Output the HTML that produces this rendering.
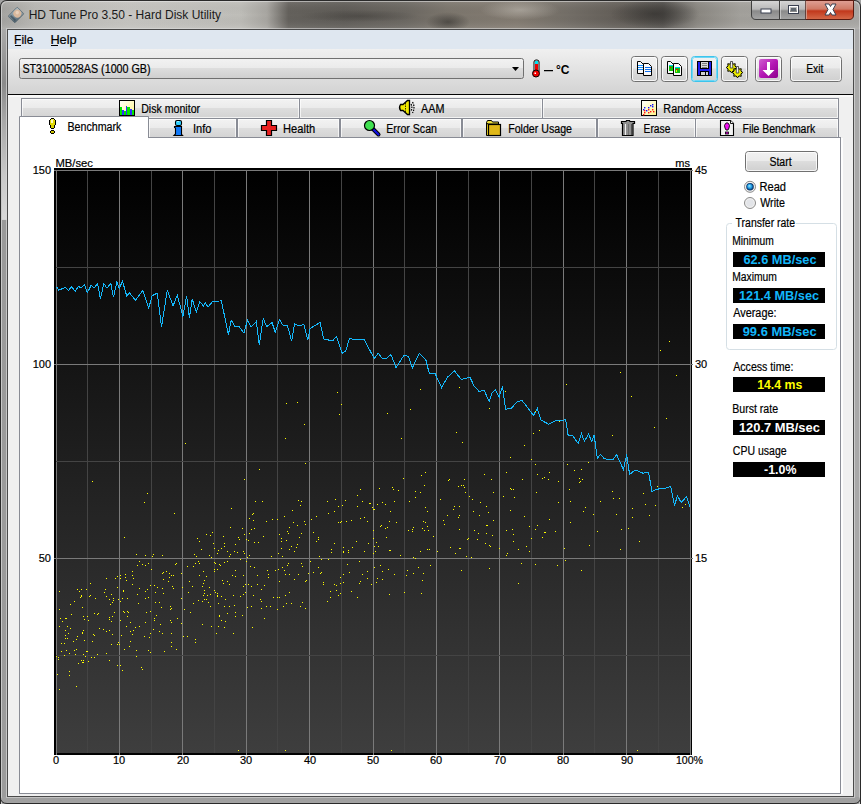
<!DOCTYPE html>
<html><head><meta charset="utf-8"><style>
html,body{margin:0;padding:0;background:#a3a3a3;width:861px;height:804px;overflow:hidden}
svg{display:block;font-family:"Liberation Sans", sans-serif}
</style></head><body>
<svg width="861" height="804" viewBox="0 0 861 804">
<defs>
<linearGradient id="title" x1="0" y1="0" x2="861" y2="0" gradientUnits="userSpaceOnUse">
<stop offset="0" stop-color="#a4a3a0"/>
<stop offset="0.04" stop-color="#b8b7b3"/>
<stop offset="0.15" stop-color="#c2c1bd"/>
<stop offset="0.28" stop-color="#bebdb8"/>
<stop offset="0.31" stop-color="#a9a7a2"/>
<stop offset="0.335" stop-color="#64615c"/>
<stop offset="0.40" stop-color="#5f5c57"/>
<stop offset="0.47" stop-color="#6b6761"/>
<stop offset="0.52" stop-color="#7c766d"/>
<stop offset="0.60" stop-color="#837b71"/>
<stop offset="0.66" stop-color="#736e67"/>
<stop offset="0.72" stop-color="#625d57"/>
<stop offset="0.77" stop-color="#54514d"/>
<stop offset="0.81" stop-color="#8a8781"/>
<stop offset="0.86" stop-color="#a3a19c"/>
<stop offset="1" stop-color="#a9a8a5"/>
</linearGradient>
<linearGradient id="titleV" x1="0" y1="0" x2="0" y2="1">
<stop offset="0" stop-color="#fff" stop-opacity="0.10"/>
<stop offset="0.5" stop-color="#000" stop-opacity="0.0"/>
<stop offset="1" stop-color="#fff" stop-opacity="0.12"/>
</linearGradient>
<linearGradient id="frameSide" x1="0" y1="0" x2="1" y2="0">
<stop offset="0" stop-color="#8a8a8a"/><stop offset="0.4" stop-color="#b0b0b0"/><stop offset="1" stop-color="#9c9c9c"/>
</linearGradient>
<linearGradient id="toolbar" x1="0" y1="0" x2="0" y2="1">
<stop offset="0" stop-color="#f0f0f0"/><stop offset="1" stop-color="#d3d3d3"/>
</linearGradient>
<linearGradient id="tab" x1="0" y1="0" x2="0" y2="1">
<stop offset="0" stop-color="#f3f3f3"/><stop offset="0.45" stop-color="#ebebeb"/><stop offset="0.5" stop-color="#dddddd"/><stop offset="1" stop-color="#d2d2d2"/>
</linearGradient>
<linearGradient id="btn" x1="0" y1="0" x2="0" y2="1">
<stop offset="0" stop-color="#f2f2f2"/><stop offset="0.45" stop-color="#ebebeb"/><stop offset="0.5" stop-color="#dddddd"/><stop offset="1" stop-color="#cfcfcf"/>
</linearGradient>
<linearGradient id="chartbg" x1="0" y1="170" x2="0" y2="753" gradientUnits="userSpaceOnUse">
<stop offset="0" stop-color="#000"/><stop offset="1" stop-color="#3e3e3e"/>
</linearGradient>
<linearGradient id="close" x1="0" y1="0" x2="0" y2="1">
<stop offset="0" stop-color="#e0a095"/><stop offset="0.45" stop-color="#cf7a66"/><stop offset="0.55" stop-color="#c2381c"/><stop offset="1" stop-color="#d56a4a"/>
</linearGradient>
<linearGradient id="capbtn" x1="0" y1="0" x2="0" y2="1">
<stop offset="0" stop-color="#d6d6d6"/><stop offset="0.45" stop-color="#b9b9b9"/><stop offset="0.55" stop-color="#8a8a8a"/><stop offset="1" stop-color="#a5a5a5"/>
</linearGradient>
<linearGradient id="purple" x1="0" y1="0" x2="1" y2="1">
<stop offset="0" stop-color="#d060d0"/><stop offset="0.5" stop-color="#b418b4"/><stop offset="1" stop-color="#8c008c"/>
</linearGradient>
<linearGradient id="ylw" x1="0" y1="0" x2="1" y2="1">
<stop offset="0" stop-color="#ffffff"/><stop offset="1" stop-color="#fff68a"/>
</linearGradient>
<radialGradient id="radio" cx="0.5" cy="0.5" r="0.5" fx="0.4" fy="0.35">
<stop offset="0" stop-color="#a0ecff"/><stop offset="0.55" stop-color="#1c98e0"/><stop offset="0.8" stop-color="#0c4a88"/><stop offset="1" stop-color="#0a2850"/>
</radialGradient>
<radialGradient id="dblob" cx="0.5" cy="0.5" r="0.5">
<stop offset="0" stop-color="#2a2826" stop-opacity="0.55"/><stop offset="1" stop-color="#2a2826" stop-opacity="0"/>
</radialGradient>
<radialGradient id="lblob" cx="0.5" cy="0.5" r="0.5">
<stop offset="0" stop-color="#c8c4bc" stop-opacity="0.5"/><stop offset="1" stop-color="#c8c4bc" stop-opacity="0"/>
</radialGradient>
<radialGradient id="glow" cx="0.5" cy="0.5" r="0.5">
<stop offset="0" stop-color="#ffffff" stop-opacity="0.12"/><stop offset="1" stop-color="#ffffff" stop-opacity="0"/>
</radialGradient>

</defs>
<path d="M0,7 Q0,0 7,0 L854,0 Q861,0 861,7 L861,804 L0,804 Z" fill="#a3a3a3"/>
<path d="M1,8 Q1,1 8,1 L853,1 Q860,1 860,8 L860,29 L1,29 Z" fill="url(#title)"/>
<rect x="1" y="1" width="859" height="28" fill="url(#titleV)"/>
<path d="M0.5,804 L0.5,7 Q0.5,0.5 7,0.5 L854,0.5 Q860.5,0.5 860.5,7 L860.5,804" fill="none" stroke="#2a2a2a" stroke-width="1"/>
<path d="M1.5,804 L1.5,8 Q1.5,1.5 8,1.5 L853,1.5 Q859.5,1.5 859.5,8 L859.5,804" fill="none" stroke="#e8e8e8" stroke-opacity="0.55" stroke-width="1"/>
<defs><linearGradient id="lframe" x1="0" y1="29" x2="0" y2="800" gradientUnits="userSpaceOnUse"><stop offset="0" stop-color="#aaaaaa"/><stop offset="0.07" stop-color="#8a8a8a"/><stop offset="0.12" stop-color="#a8a8a8"/><stop offset="0.19" stop-color="#c8c8c8"/><stop offset="0.247" stop-color="#d8d8d8"/><stop offset="0.248" stop-color="#9a9a9a"/><stop offset="1" stop-color="#9c9c9c"/></linearGradient></defs>
<rect x="2" y="29" width="5" height="772" fill="url(#lframe)"/>
<rect x="854" y="29" width="5" height="772" fill="#a9a9a9"/>
<rect x="2" y="797" width="857" height="5" fill="#a0a0a0"/>
<path d="M0.5,790 L0.5,797 Q0.5,803.5 7,803.5 L854,803.5 Q860.5,803.5 860.5,797 L860.5,790" fill="none" stroke="#2a2a2a"/>
<clipPath id="tclip"><rect x="2" y="2" width="857" height="26"/></clipPath>
<g clip-path="url(#tclip)">
<ellipse cx="448" cy="22" rx="22" ry="10" fill="url(#dblob)"/>
<ellipse cx="655" cy="14" rx="45" ry="14" fill="url(#dblob)"/>
<ellipse cx="520" cy="10" rx="40" ry="10" fill="url(#lblob)"/>
<ellipse cx="360" cy="16" rx="60" ry="6" fill="url(#dblob)" opacity="0.6"/>
</g>
<ellipse cx="125" cy="15" rx="130" ry="16" fill="url(#glow)"/>
<rect x="7" y="29" width="847" height="768" fill="#4a4a4a"/>
<rect x="8" y="30" width="845" height="766" fill="#f0f0f0"/>
<rect x="6" y="29" width="1" height="768" fill="#d8d8d8" fill-opacity="0.7"/>
<rect x="854" y="29" width="1" height="768" fill="#d8d8d8" fill-opacity="0.7"/>
<rect x="6" y="28" width="849" height="1" fill="#d8d8d8" fill-opacity="0.6"/>
<rect x="6" y="797" width="849" height="1" fill="#d8d8d8" fill-opacity="0.6"/>
<defs><linearGradient id="hdd" x1="0" y1="0" x2="1" y2="1"><stop offset="0" stop-color="#b8c8d0"/><stop offset="1" stop-color="#4a5c68"/></linearGradient></defs>
<g transform="translate(16,15) rotate(45) scale(0.86)">
<rect x="-5.5" y="-7.5" width="11" height="15" rx="1.2" fill="url(#hdd)" stroke="#50606a" stroke-width="0.8"/>
<circle cx="0" cy="-2.2" r="4.6" fill="#d9b89c"/>
<circle cx="-1" cy="-3" r="2" fill="#f0dac8" opacity="0.7"/>
<rect x="-4" y="4" width="8" height="2" fill="#334450" opacity="0.6"/>
</g>
<text x="28.7" y="19" font-size="12" font-weight="normal" fill="#1a1a1a" text-anchor="start" textLength="192.37" lengthAdjust="spacingAndGlyphs">HD Tune Pro 3.50 - Hard Disk Utility</text>
<path d="M751.5,0.5 L751.5,15 Q751.5,19.5 756,19.5 L806,19.5 L806,0.5 Z" fill="url(#capbtn)" stroke="#404040" stroke-width="1"/>
<line x1="779.5" y1="1" x2="779.5" y2="19" stroke="#404040"/>
<line x1="780.5" y1="1" x2="780.5" y2="19" stroke="#e0e0e0" stroke-opacity="0.6"/>
<path d="M806,0.5 L853.5,0.5 L853.5,15 Q853.5,19.5 849,19.5 L806,19.5 Z" fill="url(#close)" stroke="#5a1a10" stroke-width="1"/>
<line x1="806.5" y1="1" x2="806.5" y2="19" stroke="#f0c0b0" stroke-opacity="0.7"/>
<rect x="761" y="9" width="10" height="4" fill="#fff" stroke="#3a4050" stroke-width="1"/>
<rect x="788.5" y="5.5" width="10" height="8" fill="none" stroke="#3a4050" stroke-width="1"/>
<rect x="789.5" y="6.5" width="8" height="6" fill="none" stroke="#fff" stroke-width="1"/>
<rect x="791" y="8" width="5" height="3" fill="#606870"/>
<path d="M825,4 L829,4 L830.5,6.5 L832,4 L836,4 L833,9.5 L836,15 L832,15 L830.5,12.5 L829,15 L825,15 L828,9.5 Z" fill="#fff" stroke="#3a3f50" stroke-width="1" stroke-linejoin="round"/>
<rect x="8" y="30" width="845" height="19" fill="#dfe7f0"/>
<text x="14.1" y="44" font-size="12" font-weight="normal" fill="#000" text-anchor="start" textLength="19.25" lengthAdjust="spacingAndGlyphs" stroke="#000" stroke-width="0.2">File</text>
<rect x="15" y="45" width="6" height="1" fill="#000"/>
<text x="50.4" y="44" font-size="12" font-weight="normal" fill="#000" text-anchor="start" textLength="26.29" lengthAdjust="spacingAndGlyphs" stroke="#000" stroke-width="0.2">Help</text>
<rect x="51" y="45" width="7" height="1" fill="#000"/>
<rect x="8" y="49" width="845" height="45" fill="url(#toolbar)"/>
<rect x="8" y="94" width="845" height="1" fill="#050505"/>
<rect x="8" y="95" width="845" height="2" fill="#f9f9f9"/>
<rect x="19.5" y="58.5" width="504" height="20" rx="2" fill="url(#btn)" stroke="#707070"/>
<text x="22.4" y="73" font-size="12" font-weight="normal" fill="#000" text-anchor="start" textLength="128.2" lengthAdjust="spacingAndGlyphs" stroke="#000" stroke-width="0.2">ST31000528AS (1000 GB)</text>
<path d="M512,67 L519,67 L515.5,71 Z" fill="#000"/>
<g>
<rect x="534" y="60" width="5" height="13" rx="2" fill="#fff" stroke="#000" stroke-width="1"/>
<rect x="535" y="61" width="3" height="3" fill="#00e0f0"/>
<rect x="535" y="64" width="3" height="9" fill="#f00000"/>
<circle cx="536" cy="73.5" r="3.5" fill="#f00000" stroke="#000" stroke-width="1"/>
<rect x="534.5" y="72.5" width="1.5" height="1.5" fill="#fff"/>
</g>
<rect x="544" y="70" width="9" height="1" fill="#000"/>
<rect x="544" y="71" width="9" height="1" fill="#000" fill-opacity="0.25"/>
<text x="556" y="74" font-size="12" font-weight="bold" fill="#000" text-anchor="start" textLength="13.5" lengthAdjust="spacingAndGlyphs">°C</text>
<rect x="631.5" y="56.5" width="26" height="25" rx="3" fill="url(#btn)" stroke="#707070"/>
<rect x="632.5" y="57.5" width="24" height="23" rx="2" fill="none" stroke="#ffffff" stroke-opacity="0.8"/>
<rect x="661.5" y="56.5" width="26" height="25" rx="3" fill="url(#btn)" stroke="#707070"/>
<rect x="662.5" y="57.5" width="24" height="23" rx="2" fill="none" stroke="#ffffff" stroke-opacity="0.8"/>
<rect x="691.5" y="56.5" width="26" height="25" rx="3" fill="url(#btn)" stroke="#3cc4ec"/>
<rect x="692.5" y="57.5" width="24" height="23" rx="2" fill="none" stroke="#ffffff" stroke-opacity="0.8"/>
<rect x="692.5" y="57.5" width="24" height="23" rx="2" fill="none" stroke="#6fd6f4"/>
<rect x="721.5" y="56.5" width="26" height="25" rx="3" fill="url(#btn)" stroke="#707070"/>
<rect x="722.5" y="57.5" width="24" height="23" rx="2" fill="none" stroke="#ffffff" stroke-opacity="0.8"/>
<rect x="755.5" y="56.5" width="26" height="25" rx="3" fill="url(#btn)" stroke="#707070"/>
<rect x="756.5" y="57.5" width="24" height="23" rx="2" fill="none" stroke="#ffffff" stroke-opacity="0.8"/>
<rect x="790.5" y="56.5" width="51" height="25" rx="3" fill="url(#btn)" stroke="#707070"/>
<rect x="791.5" y="57.5" width="49" height="23" rx="2" fill="none" stroke="#ffffff" stroke-opacity="0.8"/>
<text x="806.2" y="73" font-size="12" font-weight="normal" fill="#000" text-anchor="start" textLength="17.31" lengthAdjust="spacingAndGlyphs" stroke="#000" stroke-width="0.2">Exit</text>
<path d="M637.5,61.5 L640.5,61.5 L643.5,64.5 L643.5,73.5 L637.5,73.5 Z" fill="#fafafa" stroke="#000" stroke-width="1"/>
<rect x="638" y="65" width="5" height="1" fill="#1890ff"/>
<rect x="638" y="67" width="5" height="1" fill="#1890ff"/>
<rect x="638" y="69" width="5" height="1" fill="#1890ff"/>
<path d="M643.5,63.5 L648.5,63.5 L651.5,66.5 L651.5,75.5 L643.5,75.5 Z" fill="#fafafa" stroke="#000" stroke-width="1"/>
<rect x="645" y="67" width="6" height="1" fill="#1070f0"/>
<rect x="645" y="69" width="6" height="1" fill="#1070f0"/>
<rect x="645" y="71" width="6" height="1" fill="#1070f0"/>
<path d="M667.5,61.5 L670.5,61.5 L673.5,64.5 L673.5,73.5 L667.5,73.5 Z" fill="#fafafa" stroke="#000" stroke-width="1"/>
<rect x="669" y="65" width="4" height="6" fill="#10c010"/>
<rect x="669" y="65" width="4" height="1" fill="#00c8f0"/>
<rect x="670" y="67" width="1" height="1" fill="#f00"/>
<path d="M673.5,63.5 L678.5,63.5 L681.5,66.5 L681.5,75.5 L673.5,75.5 Z" fill="#fafafa" stroke="#000" stroke-width="1"/>
<rect x="675" y="67" width="5" height="6" fill="#10c010"/>
<rect x="675" y="67" width="5" height="1" fill="#00c8f0"/>
<rect x="676" y="69" width="2" height="1" fill="#f00"/>
<rect x="676" y="70" width="1" height="2" fill="#e8e800"/>
<rect x="697.5" y="61.5" width="14" height="14" fill="#2020f0" stroke="#000"/>
<rect x="700.5" y="61.5" width="8" height="7" fill="#d8d8d8" stroke="#000"/>
<rect x="702" y="63" width="5" height="1" fill="#808080"/>
<rect x="702" y="65" width="5" height="1" fill="#808080"/>
<rect x="702" y="67" width="5" height="1" fill="#808080"/>
<rect x="700.5" y="71.5" width="8" height="4" fill="#d0d0d0" stroke="#000"/>
<rect x="705" y="72" width="1" height="3" fill="#000"/>
<polygon points="736.80,67.50 734.92,68.92 735.25,71.25 732.92,70.92 731.50,72.80 730.08,70.92 727.75,71.25 728.08,68.92 726.20,67.50 728.08,66.08 727.75,63.75 730.08,64.08 731.50,62.20 732.92,64.08 735.25,63.75 734.92,66.08" fill="#f0f000" stroke="#000" stroke-width="1"/>
<polygon points="742.80,72.50 740.92,73.92 741.25,76.25 738.92,75.92 737.50,77.80 736.08,75.92 733.75,76.25 734.08,73.92 732.20,72.50 734.08,71.08 733.75,68.75 736.08,69.08 737.50,67.20 738.92,69.08 741.25,68.75 740.92,71.08" fill="#f0f000" stroke="#000" stroke-width="1"/>
<path d="M730.5,61.5 L732.5,61.5 L732.8,68 L730.2,68 Z M736.5,66.5 L738.5,66.5 L738.8,73 L736.2,73 Z" fill="#f0f0f0" stroke="#333" stroke-width="0.8"/>
<rect x="759" y="59" width="19" height="19" rx="2" fill="url(#purple)"/>
<path d="M767,62 L770,62 L770,70 L774.5,70 L768.5,76 L762.5,70 L767,70 Z" fill="#fff"/>
<rect x="21.5" y="98.5" width="278" height="20" fill="url(#tab)" stroke="#898c95"/>
<rect x="22.5" y="99.5" width="276" height="18" fill="none" stroke="#fff" stroke-opacity="0.7"/>
<rect x="299.5" y="98.5" width="243" height="20" fill="url(#tab)" stroke="#898c95"/>
<rect x="300.5" y="99.5" width="241" height="18" fill="none" stroke="#fff" stroke-opacity="0.7"/>
<rect x="542.5" y="98.5" width="296" height="20" fill="url(#tab)" stroke="#898c95"/>
<rect x="543.5" y="99.5" width="294" height="18" fill="none" stroke="#fff" stroke-opacity="0.7"/>
<text x="141.2" y="113" font-size="12" font-weight="normal" fill="#000" text-anchor="start" textLength="58.88" lengthAdjust="spacingAndGlyphs" stroke="#000" stroke-width="0.2">Disk monitor</text>
<text x="421.0" y="113" font-size="12" font-weight="normal" fill="#000" text-anchor="start" textLength="23.41" lengthAdjust="spacingAndGlyphs" stroke="#000" stroke-width="0.2">AAM</text>
<text x="663.3" y="113" font-size="12" font-weight="normal" fill="#000" text-anchor="start" textLength="78.45" lengthAdjust="spacingAndGlyphs" stroke="#000" stroke-width="0.2">Random Access</text>
<rect x="148.5" y="118.5" width="88" height="20" fill="url(#tab)" stroke="#898c95"/>
<rect x="149.5" y="119.5" width="86" height="18" fill="none" stroke="#fff" stroke-opacity="0.7"/>
<text x="192.9" y="133" font-size="12" font-weight="normal" fill="#000" text-anchor="start" textLength="18.51" lengthAdjust="spacingAndGlyphs" stroke="#000" stroke-width="0.2">Info</text>
<rect x="237.5" y="118.5" width="102" height="20" fill="url(#tab)" stroke="#898c95"/>
<rect x="238.5" y="119.5" width="100" height="18" fill="none" stroke="#fff" stroke-opacity="0.7"/>
<text x="283.1" y="133" font-size="12" font-weight="normal" fill="#000" text-anchor="start" textLength="32.11" lengthAdjust="spacingAndGlyphs" stroke="#000" stroke-width="0.2">Health</text>
<rect x="340.5" y="118.5" width="121" height="20" fill="url(#tab)" stroke="#898c95"/>
<rect x="341.5" y="119.5" width="119" height="18" fill="none" stroke="#fff" stroke-opacity="0.7"/>
<text x="386.3" y="133" font-size="12" font-weight="normal" fill="#000" text-anchor="start" textLength="50.67" lengthAdjust="spacingAndGlyphs" stroke="#000" stroke-width="0.2">Error Scan</text>
<rect x="462.5" y="118.5" width="134" height="20" fill="url(#tab)" stroke="#898c95"/>
<rect x="463.5" y="119.5" width="132" height="18" fill="none" stroke="#fff" stroke-opacity="0.7"/>
<text x="508.2" y="133" font-size="12" font-weight="normal" fill="#000" text-anchor="start" textLength="63.81" lengthAdjust="spacingAndGlyphs" stroke="#000" stroke-width="0.2">Folder Usage</text>
<rect x="597.5" y="118.5" width="98" height="20" fill="url(#tab)" stroke="#898c95"/>
<rect x="598.5" y="119.5" width="96" height="18" fill="none" stroke="#fff" stroke-opacity="0.7"/>
<text x="643.6" y="133" font-size="12" font-weight="normal" fill="#000" text-anchor="start" textLength="26.76" lengthAdjust="spacingAndGlyphs" stroke="#000" stroke-width="0.2">Erase</text>
<rect x="695.5" y="118.5" width="143" height="20" fill="url(#tab)" stroke="#898c95"/>
<rect x="696.5" y="119.5" width="141" height="18" fill="none" stroke="#fff" stroke-opacity="0.7"/>
<text x="742.5" y="133" font-size="12" font-weight="normal" fill="#000" text-anchor="start" textLength="72.64" lengthAdjust="spacingAndGlyphs" stroke="#000" stroke-width="0.2">File Benchmark</text>
<rect x="19.5" y="137.5" width="821" height="656" fill="#fff" stroke="#898c95"/>
<rect x="841" y="138" width="2" height="656" fill="#fdfdfd"/>
<path d="M19.5,138 L19.5,116.5 L148.5,116.5 L148.5,138" fill="#fff" stroke="#898c95"/>
<rect x="20" y="137" width="128" height="2" fill="#fff"/>
<text x="67.4" y="131" font-size="12" font-weight="normal" fill="#000" text-anchor="start" textLength="53.98" lengthAdjust="spacingAndGlyphs" stroke="#000" stroke-width="0.2">Benchmark</text>
<rect x="119.5" y="100.5" width="15" height="15" fill="url(#ylw)" stroke="#000"/>
<rect x="120" y="107" width="2" height="8" fill="#00e800"/>
<rect x="122" y="110" width="2" height="5" fill="#3030ff"/>
<rect x="124" y="111" width="2" height="4" fill="#00e800"/>
<rect x="126" y="106" width="1" height="9" fill="#3030ff"/>
<rect x="127" y="107" width="3" height="8" fill="#00e800"/>
<rect x="130" y="109" width="2" height="6" fill="#3030ff"/>
<rect x="132" y="110" width="2" height="5" fill="#00e800"/>
<path d="M400.5,104.5 L403,104.5 L407.5,100.5 L409.5,100.5 L409.5,114.5 L407.5,114.5 L403,110.5 L400.5,110.5 Q398.5,107.5 400.5,104.5 Z" fill="#f0e800" stroke="#000" stroke-width="1.3"/>
<path d="M405.5,103 L405.5,112" stroke="#000" stroke-width="0.8" stroke-dasharray="1.5,1"/>
<path d="M411,104 Q412.8,107.5 411,111" fill="none" stroke="#000" stroke-width="1.2" stroke-dasharray="1.6,1"/>
<path d="M412.5,102 Q415.5,107.5 412.5,113" fill="none" stroke="#000" stroke-width="1.2" stroke-dasharray="1.6,1"/>
<rect x="641.5" y="100.5" width="15" height="15" fill="url(#ylw)" stroke="#000"/>
<rect x="644" y="107" width="1.4" height="1.4" fill="#1010ff"/>
<rect x="643" y="109" width="1.4" height="1.4" fill="#1010ff"/>
<rect x="646" y="110" width="1.4" height="1.4" fill="#1010ff"/>
<rect x="648" y="107" width="1.4" height="1.4" fill="#1010ff"/>
<rect x="650" y="105" width="1.4" height="1.4" fill="#1010ff"/>
<rect x="652" y="104" width="1.4" height="1.4" fill="#1010ff"/>
<rect x="652" y="106" width="1.4" height="1.4" fill="#1010ff"/>
<rect x="644" y="110" width="1.4" height="1.4" fill="#ff1010"/>
<rect x="644" y="112" width="1.4" height="1.4" fill="#ff1010"/>
<rect x="643" y="114" width="1.4" height="1.4" fill="#ff1010"/>
<rect x="648" y="109" width="1.4" height="1.4" fill="#ff1010"/>
<rect x="648" y="112" width="1.4" height="1.4" fill="#ff1010"/>
<rect x="650" y="111" width="1.4" height="1.4" fill="#ff1010"/>
<rect x="652" y="109" width="1.4" height="1.4" fill="#ff1010"/>
<rect x="653" y="111" width="1.4" height="1.4" fill="#ff1010"/>
<rect x="51" y="118" width="3" height="1" fill="#000"/>
<rect x="51" y="128" width="3" height="1" fill="#000"/>
<rect x="51" y="130" width="3" height="1" fill="#000"/>
<rect x="51" y="133" width="3" height="1" fill="#000"/>
<rect x="50" y="119" width="1" height="1" fill="#000"/>
<rect x="51" y="119" width="3" height="1" fill="#f4f060"/>
<rect x="54" y="119" width="1" height="1" fill="#000"/>
<rect x="49" y="120" width="1" height="1" fill="#000"/>
<rect x="50" y="120" width="5" height="1" fill="#e0d800"/>
<rect x="55" y="120" width="1" height="1" fill="#000"/>
<rect x="49" y="121" width="1" height="1" fill="#000"/>
<rect x="50" y="121" width="5" height="1" fill="#e0d800"/>
<rect x="55" y="121" width="1" height="1" fill="#000"/>
<rect x="49" y="122" width="1" height="1" fill="#000"/>
<rect x="50" y="122" width="5" height="1" fill="#e0d800"/>
<rect x="55" y="122" width="1" height="1" fill="#000"/>
<rect x="49" y="123" width="1" height="1" fill="#000"/>
<rect x="50" y="123" width="5" height="1" fill="#e0d800"/>
<rect x="55" y="123" width="1" height="1" fill="#000"/>
<rect x="49" y="124" width="1" height="1" fill="#000"/>
<rect x="50" y="124" width="5" height="1" fill="#e0d800"/>
<rect x="55" y="124" width="1" height="1" fill="#000"/>
<rect x="51" y="120" width="2" height="3" fill="#fffac0"/>
<rect x="50" y="125" width="1" height="1" fill="#000"/>
<rect x="51" y="125" width="3" height="1" fill="#d8d000"/>
<rect x="54" y="125" width="1" height="1" fill="#000"/>
<rect x="50" y="126" width="1" height="1" fill="#000"/>
<rect x="51" y="126" width="3" height="1" fill="#d8d000"/>
<rect x="54" y="126" width="1" height="1" fill="#000"/>
<rect x="50" y="127" width="1" height="1" fill="#000"/>
<rect x="51" y="127" width="3" height="1" fill="#d8d000"/>
<rect x="54" y="127" width="1" height="1" fill="#000"/>
<rect x="50" y="131" width="1" height="1" fill="#000"/>
<rect x="51" y="131" width="3" height="1" fill="#c8c000"/>
<rect x="54" y="131" width="1" height="1" fill="#000"/>
<rect x="50" y="132" width="1" height="1" fill="#000"/>
<rect x="51" y="132" width="3" height="1" fill="#c8c000"/>
<rect x="54" y="132" width="1" height="1" fill="#000"/>
<rect x="175.5" y="120.5" width="6" height="5" rx="1.5" fill="#30d0ff" stroke="#000" stroke-width="1.1"/>
<path d="M174.5,126.5 L181.5,126.5 L181.5,134.5 L182.5,135.5 L174,135.5 L175.5,134 L175.5,128 L174.5,127.5 Z" fill="#1078f8" stroke="#000" stroke-width="1.1"/>
<rect x="177" y="121" width="2" height="1" fill="#a0f0ff"/>
<path d="M266.5,120.5 L271.5,120.5 L271.5,125.5 L276.5,125.5 L276.5,130.5 L271.5,130.5 L271.5,135.5 L266.5,135.5 L266.5,130.5 L261.5,130.5 L261.5,125.5 L266.5,125.5 Z" fill="#e82020" stroke="#000" stroke-width="1.2"/>
<path d="M373,129 L378.5,134.5" stroke="#000" stroke-width="4" stroke-linecap="round"/>
<path d="M373,129 L378.5,134.5" stroke="#1010e0" stroke-width="2.2" stroke-linecap="round"/>
<circle cx="369.5" cy="125.5" r="5" fill="#40e050" stroke="#000" stroke-width="1.2"/>
<path d="M486.5,122.5 L487.5,120.5 L491.5,120.5 L492.5,122 L498.5,122 L498.5,124 L486.5,124 Z" fill="#f0e040" stroke="#000" stroke-width="1"/>
<path d="M486.5,123 L486.5,135.5 L488.5,135.5 L488.5,124.5 Z" fill="#e8d020" stroke="#000" stroke-width="1"/>
<rect x="488.5" y="124.5" width="12" height="11" fill="#e0b818" stroke="#000" stroke-width="1.2"/>
<path d="M621.5,121.5 L626,121.5 L626.5,120.5 L629.5,120.5 L630,121.5 L634.5,121.5 L634.5,123.5 L633,123.5 L633,135.5 L622.5,135.5 L622.5,123.5 L621.5,123.5 Z" fill="#909090" stroke="#000" stroke-width="1.2"/>
<rect x="625" y="124" width="1" height="11" fill="#f0f0f0"/>
<rect x="628" y="124" width="1" height="11" fill="#707070"/>
<rect x="631" y="124" width="1" height="11" fill="#505050"/>
<path d="M720.5,120.5 L730.5,120.5 L733.5,123.5 L733.5,135.5 L720.5,135.5 Z" fill="#f2f2f2" stroke="#000" stroke-width="1.1"/>
<path d="M730.5,120.5 L730.5,123.5 L733.5,123.5" fill="#fff" stroke="#000" stroke-width="0.9"/>
<path d="M725.5,123.5 Q727,122 728.5,123.5 L729.5,125.5 L729,128 L728,130 L726,130 L725,128 L724.5,125.5 Z" fill="#f010f0" stroke="#000" stroke-width="0.9"/>
<rect x="725.5" y="132" width="3" height="2" fill="#e000e0" stroke="#000" stroke-width="0.8"/>
<g shape-rendering="crispEdges">
<rect x="54" y="168" width="638" height="587" fill="#000"/>
<rect x="56" y="170" width="634" height="583" fill="url(#chartbg)"/>
<rect x="56" y="170" width="1" height="585" fill="#7a7a7a"/>
<rect x="87" y="170" width="1" height="583" fill="#444444"/>
<rect x="119" y="170" width="1" height="585" fill="#7a7a7a"/>
<rect x="151" y="170" width="1" height="583" fill="#444444"/>
<rect x="182" y="170" width="1" height="585" fill="#7a7a7a"/>
<rect x="214" y="170" width="1" height="583" fill="#444444"/>
<rect x="246" y="170" width="1" height="585" fill="#7a7a7a"/>
<rect x="277" y="170" width="1" height="583" fill="#444444"/>
<rect x="309" y="170" width="1" height="585" fill="#7a7a7a"/>
<rect x="341" y="170" width="1" height="583" fill="#444444"/>
<rect x="373" y="170" width="1" height="585" fill="#7a7a7a"/>
<rect x="404" y="170" width="1" height="583" fill="#444444"/>
<rect x="436" y="170" width="1" height="585" fill="#7a7a7a"/>
<rect x="468" y="170" width="1" height="583" fill="#444444"/>
<rect x="499" y="170" width="1" height="585" fill="#7a7a7a"/>
<rect x="531" y="170" width="1" height="583" fill="#444444"/>
<rect x="563" y="170" width="1" height="585" fill="#7a7a7a"/>
<rect x="594" y="170" width="1" height="583" fill="#444444"/>
<rect x="626" y="170" width="1" height="585" fill="#7a7a7a"/>
<rect x="658" y="170" width="1" height="583" fill="#444444"/>
<rect x="690" y="170" width="1" height="585" fill="#7a7a7a"/>
<rect x="56" y="267" width="634" height="1" fill="#444444"/>
<rect x="56" y="461" width="634" height="1" fill="#444444"/>
<rect x="56" y="655" width="634" height="1" fill="#444444"/>
<rect x="54" y="170" width="639" height="1" fill="#7a7a7a"/>
<rect x="54" y="364" width="639" height="1" fill="#7a7a7a"/>
<rect x="54" y="558" width="639" height="1" fill="#7a7a7a"/>
</g>
<polyline points="56.5,286.7 58.8,290.2 65.1,287.4 68.6,290.4 71.6,286.7 75.1,291.4 78.3,286.7 81.4,287.5 84.4,284.4 87.2,292.8 91.3,285.1 94.1,288.1 97.6,283.5 100.4,299.0 103.9,283.5 106.9,288.1 110.9,283.5 113.4,297.4 116.9,282.0 119.2,288.6 122.5,281.1 126.7,296.0 129.4,292.8 135.5,300.2 142.9,290.4 148.7,308.3 152.2,295.6 157.3,293.2 161.5,326.9 167.3,290.4 173.1,306.0 177.3,295.0 182.9,316.5 186.6,296.0 189.4,317.6 192.2,299.0 196.3,311.8 199.8,301.4 203.3,306.0 205.5,303.0 208.0,307.2 212.6,301.4 221.4,300.9 228.4,334.6 231.2,320.0 234.7,326.2 239.3,326.9 244.0,333.2 247.4,320.2 251.1,327.2 256.3,321.4 259.3,345.3 263.2,318.3 266.7,326.7 272.0,322.5 275.3,332.3 279.5,319.7 283.0,325.3 287.6,326.0 291.6,341.1 294.6,323.7 299.2,326.0 303.9,324.4 307.8,340.0 310.2,328.3 314.3,326.0 320.1,322.5 323.6,338.8 327.8,339.9 332.9,340.6 336.4,336.5 342.2,353.2 345.7,350.9 349.6,338.3 355.7,339.9 358.5,339.2 364.3,339.9 374.3,358.5 378.2,353.2 382.2,358.5 386.3,358.5 391.0,354.6 396.1,367.8 403.8,355.5 408.4,356.2 412.4,367.8 419.3,353.2 425.8,359.7 429.3,373.6 435.1,373.5 441.6,387.6 447.4,377.2 454.4,370.9 461.4,379.5 470.0,377.2 474.1,386.0 479.2,391.6 483.9,389.9 489.2,401.6 492.3,392.3 495.5,389.9 499.2,396.9 502.5,386.0 505.5,409.2 511.3,408.5 516.4,402.3 521.8,400.4 527.6,407.4 533.4,415.5 537.3,408.5 541.0,420.1 548.5,424.1 556.6,420.1 560.0,421.1 565.7,419.5 568.1,435.0 572.2,435.0 578.2,443.6 581.5,433.3 584.4,441.5 588.5,434.1 591.7,441.5 594.1,435.0 597.4,458.5 600.3,454.5 603.9,458.2 607.2,459.3 613.3,459.3 616.6,454.5 623.4,469.6 626.7,454.5 629.6,474.5 634.8,470.2 638.0,471.0 642.9,473.2 648.6,472.4 651.9,491.4 657.2,489.1 664.1,488.6 670.6,486.5 674.6,505.4 677.4,495.6 681.1,502.4 686.5,496.7 690.1,507.6" fill="none" stroke="#14b8fc" stroke-width="1" stroke-linejoin="miter" shape-rendering="crispEdges"/>
<path d="M261,589h1v1h-1zM287,565h1v1h-1zM79,591h1v1h-1zM580,481h1v1h-1zM421,593h1v1h-1zM239,539h1v1h-1zM251,529h1v1h-1zM292,510h1v1h-1zM93,634h1v1h-1zM427,511h1v1h-1zM210,594h1v1h-1zM130,631h1v1h-1zM152,556h1v1h-1zM254,567h1v1h-1zM423,573h1v1h-1zM477,539h1v1h-1zM300,505h1v1h-1zM130,641h1v1h-1zM138,603h1v1h-1zM340,583h1v1h-1zM232,575h1v1h-1zM151,569h1v1h-1zM203,595h1v1h-1zM321,559h1v1h-1zM382,571h1v1h-1zM308,573h1v1h-1zM95,598h1v1h-1zM89,596h1v1h-1zM120,578h1v1h-1zM150,585h1v1h-1zM286,603h1v1h-1zM362,501h1v1h-1zM273,597h1v1h-1zM148,563h1v1h-1zM221,548h1v1h-1zM549,472h1v1h-1zM199,575h1v1h-1zM233,595h1v1h-1zM195,563h1v1h-1zM359,583h1v1h-1zM109,660h1v1h-1zM359,561h1v1h-1zM266,606h1v1h-1zM163,572h1v1h-1zM148,650h1v1h-1zM403,478h1v1h-1zM579,478h1v1h-1zM427,526h1v1h-1zM139,588h1v1h-1zM393,489h1v1h-1zM335,499h1v1h-1zM408,530h1v1h-1zM123,590h1v1h-1zM377,578h1v1h-1zM444,524h1v1h-1zM394,574h1v1h-1zM588,462h1v1h-1zM208,602h1v1h-1zM153,629h1v1h-1zM583,511h1v1h-1zM382,502h1v1h-1zM68,633h1v1h-1zM67,638h1v1h-1zM224,606h1v1h-1zM227,581h1v1h-1zM219,615h1v1h-1zM112,634h1v1h-1zM564,548h1v1h-1zM98,613h1v1h-1zM137,594h1v1h-1zM125,574h1v1h-1zM249,555h1v1h-1zM373,530h1v1h-1zM65,635h1v1h-1zM176,649h1v1h-1zM330,591h1v1h-1zM305,581h1v1h-1zM459,506h1v1h-1zM90,583h1v1h-1zM159,631h1v1h-1zM234,551h1v1h-1zM338,595h1v1h-1zM252,514h1v1h-1zM374,546h1v1h-1zM59,591h1v1h-1zM70,604h1v1h-1zM427,549h1v1h-1zM150,611h1v1h-1zM83,654h1v1h-1zM570,501h1v1h-1zM201,549h1v1h-1zM58,657h1v1h-1zM374,567h1v1h-1zM215,563h1v1h-1zM518,549h1v1h-1zM298,574h1v1h-1zM463,485h1v1h-1zM249,533h1v1h-1zM94,635h1v1h-1zM240,559h1v1h-1zM351,591h1v1h-1zM649,515h1v1h-1zM340,522h1v1h-1zM424,530h1v1h-1zM202,586h1v1h-1zM367,521h1v1h-1zM145,591h1v1h-1zM132,634h1v1h-1zM291,603h1v1h-1zM327,501h1v1h-1zM120,601h1v1h-1zM224,546h1v1h-1zM512,529h1v1h-1zM464,479h1v1h-1zM643,493h1v1h-1zM220,565h1v1h-1zM409,501h1v1h-1zM195,642h1v1h-1zM341,521h1v1h-1zM113,598h1v1h-1zM318,539h1v1h-1zM135,627h1v1h-1zM227,551h1v1h-1zM69,653h1v1h-1zM428,530h1v1h-1zM213,543h1v1h-1zM345,500h1v1h-1zM248,540h1v1h-1zM127,611h1v1h-1zM197,538h1v1h-1zM247,607h1v1h-1zM357,506h1v1h-1zM250,566h1v1h-1zM219,616h1v1h-1zM199,563h1v1h-1zM181,623h1v1h-1zM376,582h1v1h-1zM202,624h1v1h-1zM370,503h1v1h-1zM305,608h1v1h-1zM145,555h1v1h-1zM264,618h1v1h-1zM529,526h1v1h-1zM266,521h1v1h-1zM233,633h1v1h-1zM187,636h1v1h-1zM87,616h1v1h-1zM75,654h1v1h-1zM542,478h1v1h-1zM218,626h1v1h-1zM270,606h1v1h-1zM510,488h1v1h-1zM58,659h1v1h-1zM71,614h1v1h-1zM301,533h1v1h-1zM171,622h1v1h-1zM440,499h1v1h-1zM106,653h1v1h-1zM212,532h1v1h-1zM109,617h1v1h-1zM204,593h1v1h-1zM132,584h1v1h-1zM415,558h1v1h-1zM211,626h1v1h-1zM422,528h1v1h-1zM202,601h1v1h-1zM81,596h1v1h-1zM340,593h1v1h-1zM655,505h1v1h-1zM289,527h1v1h-1zM217,596h1v1h-1zM263,536h1v1h-1zM253,595h1v1h-1zM120,620h1v1h-1zM461,485h1v1h-1zM235,612h1v1h-1zM254,542h1v1h-1zM181,573h1v1h-1zM59,626h1v1h-1zM159,602h1v1h-1zM112,602h1v1h-1zM235,616h1v1h-1zM124,649h1v1h-1zM136,656h1v1h-1zM362,574h1v1h-1zM157,587h1v1h-1zM581,469h1v1h-1zM299,537h1v1h-1zM82,662h1v1h-1zM130,622h1v1h-1zM453,509h1v1h-1zM473,511h1v1h-1zM70,628h1v1h-1zM169,573h1v1h-1zM137,565h1v1h-1zM81,589h1v1h-1zM380,526h1v1h-1zM142,669h1v1h-1zM97,654h1v1h-1zM230,554h1v1h-1zM188,592h1v1h-1zM171,642h1v1h-1zM162,555h1v1h-1zM407,570h1v1h-1zM455,553h1v1h-1zM422,580h1v1h-1zM336,585h1v1h-1zM216,633h1v1h-1zM254,528h1v1h-1zM330,597h1v1h-1zM139,626h1v1h-1zM281,548h1v1h-1zM198,600h1v1h-1zM357,597h1v1h-1zM210,535h1v1h-1zM223,583h1v1h-1zM412,531h1v1h-1zM521,563h1v1h-1zM83,616h1v1h-1zM549,519h1v1h-1zM182,587h1v1h-1zM166,571h1v1h-1zM86,651h1v1h-1zM342,505h1v1h-1zM203,571h1v1h-1zM224,562h1v1h-1zM224,627h1v1h-1zM65,618h1v1h-1zM529,551h1v1h-1zM251,586h1v1h-1zM105,589h1v1h-1zM145,565h1v1h-1zM97,614h1v1h-1zM621,529h1v1h-1zM123,591h1v1h-1zM238,537h1v1h-1zM536,492h1v1h-1zM218,603h1v1h-1zM289,592h1v1h-1zM447,515h1v1h-1zM275,570h1v1h-1zM113,600h1v1h-1zM56,656h1v1h-1zM367,571h1v1h-1zM172,586h1v1h-1zM192,586h1v1h-1zM125,577h1v1h-1zM281,541h1v1h-1zM620,549h1v1h-1zM222,580h1v1h-1zM204,590h1v1h-1zM465,492h1v1h-1zM154,620h1v1h-1zM423,521h1v1h-1zM177,618h1v1h-1zM154,585h1v1h-1zM387,527h1v1h-1zM518,583h1v1h-1zM120,665h1v1h-1zM331,552h1v1h-1zM123,611h1v1h-1zM373,538h1v1h-1zM145,598h1v1h-1zM328,559h1v1h-1zM323,582h1v1h-1zM343,551h1v1h-1zM118,642h1v1h-1zM214,569h1v1h-1zM450,547h1v1h-1zM302,602h1v1h-1zM80,597h1v1h-1zM385,528h1v1h-1zM380,565h1v1h-1zM489,545h1v1h-1zM281,538h1v1h-1zM321,572h1v1h-1zM279,534h1v1h-1zM390,550h1v1h-1zM304,521h1v1h-1zM458,517h1v1h-1zM279,597h1v1h-1zM242,528h1v1h-1zM294,551h1v1h-1zM513,489h1v1h-1zM247,557h1v1h-1zM597,531h1v1h-1zM145,622h1v1h-1zM214,548h1v1h-1zM204,580h1v1h-1zM557,565h1v1h-1zM181,598h1v1h-1zM223,536h1v1h-1zM368,543h1v1h-1zM371,584h1v1h-1zM60,618h1v1h-1zM103,629h1v1h-1zM74,650h1v1h-1zM77,636h1v1h-1zM288,563h1v1h-1zM331,549h1v1h-1zM375,551h1v1h-1zM257,575h1v1h-1zM81,660h1v1h-1zM246,539h1v1h-1zM487,525h1v1h-1zM120,575h1v1h-1zM471,557h1v1h-1zM219,564h1v1h-1zM257,584h1v1h-1zM415,491h1v1h-1zM64,655h1v1h-1zM357,495h1v1h-1zM464,487h1v1h-1zM489,568h1v1h-1zM111,594h1v1h-1zM209,555h1v1h-1zM87,651h1v1h-1zM109,630h1v1h-1zM510,457h1v1h-1zM106,631h1v1h-1zM161,607h1v1h-1zM420,551h1v1h-1zM147,589h1v1h-1zM320,573h1v1h-1zM415,497h1v1h-1zM251,606h1v1h-1zM294,579h1v1h-1zM235,544h1v1h-1zM323,584h1v1h-1zM229,606h1v1h-1zM275,570h1v1h-1zM204,599h1v1h-1zM351,520h1v1h-1zM347,564h1v1h-1zM545,532h1v1h-1zM386,537h1v1h-1zM175,564h1v1h-1zM413,527h1v1h-1zM150,652h1v1h-1zM155,592h1v1h-1zM385,504h1v1h-1zM364,517h1v1h-1zM217,553h1v1h-1zM88,661h1v1h-1zM632,508h1v1h-1zM305,524h1v1h-1zM196,556h1v1h-1zM85,656h1v1h-1zM91,657h1v1h-1zM245,592h1v1h-1zM122,598h1v1h-1zM162,573h1v1h-1zM485,543h1v1h-1zM619,498h1v1h-1zM117,644h1v1h-1zM271,556h1v1h-1zM454,506h1v1h-1zM406,575h1v1h-1zM224,543h1v1h-1zM268,577h1v1h-1zM92,641h1v1h-1zM237,552h1v1h-1zM117,665h1v1h-1zM66,618h1v1h-1zM144,636h1v1h-1zM194,554h1v1h-1zM170,620h1v1h-1zM111,621h1v1h-1zM229,584h1v1h-1zM425,472h1v1h-1zM513,541h1v1h-1zM65,638h1v1h-1zM173,588h1v1h-1zM433,536h1v1h-1zM338,506h1v1h-1zM506,530h1v1h-1zM94,657h1v1h-1zM392,487h1v1h-1zM171,575h1v1h-1zM117,587h1v1h-1zM67,626h1v1h-1zM121,635h1v1h-1zM84,619h1v1h-1zM133,578h1v1h-1zM149,637h1v1h-1zM389,594h1v1h-1zM548,479h1v1h-1zM593,514h1v1h-1zM214,590h1v1h-1zM99,628h1v1h-1zM69,675h1v1h-1zM77,589h1v1h-1zM486,533h1v1h-1zM214,571h1v1h-1zM249,518h1v1h-1zM381,525h1v1h-1zM394,501h1v1h-1zM313,532h1v1h-1zM111,644h1v1h-1zM468,538h1v1h-1zM348,550h1v1h-1zM209,587h1v1h-1zM298,500h1v1h-1zM207,595h1v1h-1zM243,551h1v1h-1zM334,543h1v1h-1zM334,511h1v1h-1zM524,516h1v1h-1zM279,581h1v1h-1zM136,554h1v1h-1zM418,567h1v1h-1zM296,547h1v1h-1zM514,497h1v1h-1zM260,599h1v1h-1zM372,507h1v1h-1zM420,492h1v1h-1zM62,621h1v1h-1zM302,566h1v1h-1zM118,599h1v1h-1zM364,551h1v1h-1zM164,651h1v1h-1zM126,626h1v1h-1zM155,602h1v1h-1zM171,608h1v1h-1zM459,515h1v1h-1zM493,492h1v1h-1zM479,515h1v1h-1zM316,516h1v1h-1zM537,474h1v1h-1zM567,464h1v1h-1zM544,532h1v1h-1zM225,621h1v1h-1zM425,522h1v1h-1zM449,479h1v1h-1zM210,606h1v1h-1zM558,481h1v1h-1zM283,606h1v1h-1zM128,612h1v1h-1zM311,519h1v1h-1zM211,557h1v1h-1zM206,599h1v1h-1zM503,496h1v1h-1zM585,507h1v1h-1zM156,615h1v1h-1zM376,542h1v1h-1zM221,596h1v1h-1zM289,574h1v1h-1zM133,630h1v1h-1zM227,561h1v1h-1zM253,520h1v1h-1zM168,581h1v1h-1zM412,529h1v1h-1zM244,553h1v1h-1zM510,510h1v1h-1zM139,561h1v1h-1zM278,569h1v1h-1zM499,548h1v1h-1zM171,646h1v1h-1zM81,595h1v1h-1zM297,544h1v1h-1zM460,548h1v1h-1zM217,595h1v1h-1zM277,597h1v1h-1zM83,630h1v1h-1zM86,589h1v1h-1zM110,604h1v1h-1zM234,605h1v1h-1zM343,574h1v1h-1zM327,601h1v1h-1zM83,662h1v1h-1zM221,620h1v1h-1zM214,562h1v1h-1zM316,541h1v1h-1zM480,502h1v1h-1zM382,579h1v1h-1zM616,514h1v1h-1zM267,570h1v1h-1zM582,479h1v1h-1zM284,516h1v1h-1zM127,616h1v1h-1zM286,540h1v1h-1zM531,538h1v1h-1zM124,612h1v1h-1zM61,651h1v1h-1zM469,496h1v1h-1zM243,586h1v1h-1zM162,633h1v1h-1zM173,575h1v1h-1zM289,549h1v1h-1zM82,633h1v1h-1zM369,503h1v1h-1zM106,596h1v1h-1zM112,616h1v1h-1zM57,674h1v1h-1zM235,570h1v1h-1zM334,584h1v1h-1zM243,575h1v1h-1zM109,619h1v1h-1zM570,522h1v1h-1zM360,518h1v1h-1zM73,641h1v1h-1zM474,530h1v1h-1zM319,556h1v1h-1zM170,606h1v1h-1zM127,598h1v1h-1zM215,592h1v1h-1zM199,541h1v1h-1zM106,578h1v1h-1zM535,564h1v1h-1zM142,564h1v1h-1zM206,534h1v1h-1zM246,561h1v1h-1zM162,588h1v1h-1zM579,482h1v1h-1zM513,534h1v1h-1zM565,560h1v1h-1zM484,474h1v1h-1zM424,485h1v1h-1zM126,580h1v1h-1zM491,479h1v1h-1zM657,486h1v1h-1zM78,663h1v1h-1zM486,525h1v1h-1zM443,520h1v1h-1zM193,603h1v1h-1zM284,570h1v1h-1zM301,501h1v1h-1zM69,671h1v1h-1zM84,640h1v1h-1zM373,553h1v1h-1zM685,504h1v1h-1zM458,486h1v1h-1zM248,584h1v1h-1zM278,553h1v1h-1zM94,613h1v1h-1zM288,533h1v1h-1zM277,519h1v1h-1zM338,522h1v1h-1zM163,579h1v1h-1zM425,507h1v1h-1zM282,556h1v1h-1zM230,527h1v1h-1zM160,624h1v1h-1zM183,636h1v1h-1zM466,556h1v1h-1zM106,653h1v1h-1zM272,519h1v1h-1zM190,612h1v1h-1zM467,539h1v1h-1zM318,567h1v1h-1zM268,574h1v1h-1zM64,643h1v1h-1zM682,507h1v1h-1zM115,578h1v1h-1zM542,537h1v1h-1zM429,549h1v1h-1zM437,551h1v1h-1zM252,627h1v1h-1zM343,552h1v1h-1zM61,643h1v1h-1zM535,464h1v1h-1zM374,509h1v1h-1zM150,633h1v1h-1zM74,601h1v1h-1zM459,548h1v1h-1zM628,528h1v1h-1zM97,614h1v1h-1zM413,573h1v1h-1zM198,561h1v1h-1zM184,609h1v1h-1zM193,566h1v1h-1zM225,599h1v1h-1zM235,576h1v1h-1zM343,582h1v1h-1zM189,581h1v1h-1zM171,633h1v1h-1zM244,534h1v1h-1zM522,479h1v1h-1zM488,512h1v1h-1zM76,649h1v1h-1zM493,520h1v1h-1zM122,670h1v1h-1zM132,575h1v1h-1zM490,546h1v1h-1zM373,509h1v1h-1zM277,609h1v1h-1zM229,556h1v1h-1zM378,546h1v1h-1zM285,574h1v1h-1zM511,489h1v1h-1zM301,563h1v1h-1zM59,689h1v1h-1zM217,569h1v1h-1zM129,646h1v1h-1zM632,517h1v1h-1zM404,592h1v1h-1zM56,656h1v1h-1zM296,547h1v1h-1zM389,550h1v1h-1zM400,555h1v1h-1zM356,541h1v1h-1zM146,612h1v1h-1zM388,569h1v1h-1zM83,660h1v1h-1zM574,470h1v1h-1zM282,567h1v1h-1zM343,547h1v1h-1zM340,577h1v1h-1zM537,525h1v1h-1zM206,576h1v1h-1zM297,525h1v1h-1zM169,577h1v1h-1zM261,608h1v1h-1zM600,501h1v1h-1zM291,546h1v1h-1zM243,594h1v1h-1zM300,606h1v1h-1zM507,553h1v1h-1zM264,585h1v1h-1zM535,529h1v1h-1zM349,572h1v1h-1zM367,578h1v1h-1zM310,561h1v1h-1zM544,477h1v1h-1zM104,592h1v1h-1zM413,557h1v1h-1zM90,595h1v1h-1zM148,597h1v1h-1zM59,609h1v1h-1zM217,593h1v1h-1zM379,488h1v1h-1zM218,550h1v1h-1zM396,522h1v1h-1zM287,531h1v1h-1zM88,620h1v1h-1zM261,601h1v1h-1zM240,596h1v1h-1zM612,491h1v1h-1zM461,570h1v1h-1zM170,609h1v1h-1zM242,615h1v1h-1zM187,566h1v1h-1zM318,537h1v1h-1zM154,618h1v1h-1zM82,607h1v1h-1zM258,542h1v1h-1zM589,545h1v1h-1zM76,639h1v1h-1zM197,538h1v1h-1zM328,513h1v1h-1zM581,570h1v1h-1zM389,521h1v1h-1zM645,504h1v1h-1zM398,490h1v1h-1zM227,613h1v1h-1zM76,686h1v1h-1zM472,499h1v1h-1zM526,546h1v1h-1zM245,584h1v1h-1zM348,552h1v1h-1zM117,576h1v1h-1zM293,522h1v1h-1zM163,593h1v1h-1zM360,489h1v1h-1zM613,498h1v1h-1zM352,547h1v1h-1zM377,504h1v1h-1zM136,650h1v1h-1zM65,630h1v1h-1zM492,535h1v1h-1zM153,554h1v1h-1zM109,599h1v1h-1zM506,472h1v1h-1zM82,632h1v1h-1zM639,541h1v1h-1zM111,644h1v1h-1zM486,506h1v1h-1zM195,639h1v1h-1zM360,581h1v1h-1zM459,529h1v1h-1zM114,612h1v1h-1zM141,667h1v1h-1zM430,565h1v1h-1zM555,531h1v1h-1zM203,583h1v1h-1zM506,555h1v1h-1zM313,572h1v1h-1zM558,502h1v1h-1zM66,650h1v1h-1zM346,521h1v1h-1zM448,480h1v1h-1zM336,590h1v1h-1zM132,571h1v1h-1zM285,595h1v1h-1zM306,580h1v1h-1zM176,563h1v1h-1zM390,511h1v1h-1zM569,489h1v1h-1zM119,644h1v1h-1zM478,533h1v1h-1zM337,392h1v1h-1zM285,438h1v1h-1zM456,432h1v1h-1zM387,413h1v1h-1zM631,396h1v1h-1zM286,403h1v1h-1zM92,481h1v1h-1zM489,408h1v1h-1zM339,414h1v1h-1zM620,372h1v1h-1zM531,459h1v1h-1zM262,501h1v1h-1zM660,350h1v1h-1zM147,493h1v1h-1zM421,475h1v1h-1zM304,424h1v1h-1zM462,442h1v1h-1zM539,430h1v1h-1zM401,438h1v1h-1zM676,375h1v1h-1zM566,384h1v1h-1zM297,402h1v1h-1zM505,391h1v1h-1zM231,508h1v1h-1zM420,389h1v1h-1zM559,421h1v1h-1zM144,502h1v1h-1zM612,435h1v1h-1zM524,445h1v1h-1zM253,513h1v1h-1zM244,479h1v1h-1zM669,341h1v1h-1zM174,513h1v1h-1zM654,427h1v1h-1zM259,469h1v1h-1zM124,537h1v1h-1zM305,463h1v1h-1zM666,418h1v1h-1zM185,443h1v1h-1zM341,404h1v1h-1zM459,387h1v1h-1zM255,501h1v1h-1zM535,411h1v1h-1zM410,409h1v1h-1zM533,433h1v1h-1zM285,750h1v1h-1zM637,750h1v1h-1zM391,750h1v1h-1zM238,750h1v1h-1z" fill="#ffff00" shape-rendering="crispEdges"/>
<text x="51" y="174" font-size="11" font-weight="normal" fill="#000" text-anchor="end" stroke="#000" stroke-width="0.2">150</text>
<text x="51" y="368" font-size="11" font-weight="normal" fill="#000" text-anchor="end" stroke="#000" stroke-width="0.2">100</text>
<text x="51" y="562" font-size="11" font-weight="normal" fill="#000" text-anchor="end" stroke="#000" stroke-width="0.2">50</text>
<text x="695" y="174" font-size="11" font-weight="normal" fill="#000" text-anchor="start" stroke="#000" stroke-width="0.2">45</text>
<text x="695" y="368" font-size="11" font-weight="normal" fill="#000" text-anchor="start" stroke="#000" stroke-width="0.2">30</text>
<text x="695" y="562" font-size="11" font-weight="normal" fill="#000" text-anchor="start" stroke="#000" stroke-width="0.2">15</text>
<text x="55.5" y="167" font-size="11" font-weight="normal" fill="#000" text-anchor="start" textLength="37.5" lengthAdjust="spacingAndGlyphs" stroke="#000" stroke-width="0.2">MB/sec</text>
<text x="690" y="167" font-size="11" font-weight="normal" fill="#000" text-anchor="end" stroke="#000" stroke-width="0.2">ms</text>
<text x="53" y="764" font-size="11" font-weight="normal" fill="#000" text-anchor="start" stroke="#000" stroke-width="0.2">0</text>
<text x="119" y="764" font-size="11" font-weight="normal" fill="#000" text-anchor="middle" stroke="#000" stroke-width="0.2">10</text>
<text x="183" y="764" font-size="11" font-weight="normal" fill="#000" text-anchor="middle" stroke="#000" stroke-width="0.2">20</text>
<text x="246" y="764" font-size="11" font-weight="normal" fill="#000" text-anchor="middle" stroke="#000" stroke-width="0.2">30</text>
<text x="310" y="764" font-size="11" font-weight="normal" fill="#000" text-anchor="middle" stroke="#000" stroke-width="0.2">40</text>
<text x="373" y="764" font-size="11" font-weight="normal" fill="#000" text-anchor="middle" stroke="#000" stroke-width="0.2">50</text>
<text x="436" y="764" font-size="11" font-weight="normal" fill="#000" text-anchor="middle" stroke="#000" stroke-width="0.2">60</text>
<text x="500" y="764" font-size="11" font-weight="normal" fill="#000" text-anchor="middle" stroke="#000" stroke-width="0.2">70</text>
<text x="563" y="764" font-size="11" font-weight="normal" fill="#000" text-anchor="middle" stroke="#000" stroke-width="0.2">80</text>
<text x="627" y="764" font-size="11" font-weight="normal" fill="#000" text-anchor="middle" stroke="#000" stroke-width="0.2">90</text>
<text x="676" y="764" font-size="11" font-weight="normal" fill="#000" text-anchor="start" textLength="27" lengthAdjust="spacingAndGlyphs" stroke="#000" stroke-width="0.2">100%</text>
<rect x="745.5" y="151.5" width="72" height="20" rx="3" fill="url(#btn)" stroke="#707070"/>
<rect x="746.5" y="152.5" width="70" height="18" rx="2" fill="none" stroke="#ffffff" stroke-opacity="0.8"/>
<text x="769.4" y="166" font-size="12" font-weight="normal" fill="#000" text-anchor="start" textLength="22.2" lengthAdjust="spacingAndGlyphs" stroke="#000" stroke-width="0.2">Start</text>
<circle cx="750" cy="186.8" r="5.5" fill="#f4f4f4" stroke="#8a8a8a"/>
<circle cx="750" cy="186.8" r="3.8" fill="url(#radio)"/>
<text x="759.5" y="191" font-size="12" font-weight="normal" fill="#000" text-anchor="start" textLength="26.49" lengthAdjust="spacingAndGlyphs" stroke="#000" stroke-width="0.2">Read</text>
<circle cx="750" cy="203" r="5.5" fill="#f0f0f0" stroke="#8a8a8a"/><circle cx="750" cy="203" r="3.8" fill="#e2e4e8"/>
<text x="760.2" y="207" font-size="12" font-weight="normal" fill="#000" text-anchor="start" textLength="24.78" lengthAdjust="spacingAndGlyphs" stroke="#000" stroke-width="0.2">Write</text>
<rect x="726.5" y="223.5" width="110" height="126" rx="3" fill="none" stroke="#d5dfe5"/>
<rect x="732" y="218" width="64" height="10" fill="#fff"/>
<text x="735.6" y="227" font-size="12" font-weight="normal" fill="#000" text-anchor="start" textLength="59.48" lengthAdjust="spacingAndGlyphs" stroke="#000" stroke-width="0.2">Transfer rate</text>
<text x="732.2" y="245" font-size="12" font-weight="normal" fill="#000" text-anchor="start" textLength="41.57" lengthAdjust="spacingAndGlyphs" stroke="#000" stroke-width="0.2">Minimum</text>
<rect x="733" y="252" width="92" height="15" fill="#000"/>
<text x="743.4" y="263.7" font-size="12.5" font-weight="bold" fill="#12b6fa" text-anchor="start" textLength="73.21" lengthAdjust="spacingAndGlyphs">62.6 MB/sec</text>
<text x="732.2" y="281" font-size="12" font-weight="normal" fill="#000" text-anchor="start" textLength="44.73" lengthAdjust="spacingAndGlyphs" stroke="#000" stroke-width="0.2">Maximum</text>
<rect x="733" y="288" width="92" height="15" fill="#000"/>
<text x="739.0" y="299.7" font-size="12.5" font-weight="bold" fill="#12b6fa" text-anchor="start" textLength="80.1" lengthAdjust="spacingAndGlyphs">121.4 MB/sec</text>
<text x="733.2" y="317" font-size="12" font-weight="normal" fill="#000" text-anchor="start" textLength="43.32" lengthAdjust="spacingAndGlyphs" stroke="#000" stroke-width="0.2">Average:</text>
<rect x="733" y="324" width="92" height="15" fill="#000"/>
<text x="742.7" y="335.7" font-size="12.5" font-weight="bold" fill="#12b6fa" text-anchor="start" textLength="73.93" lengthAdjust="spacingAndGlyphs">99.6 MB/sec</text>
<text x="733.2" y="371" font-size="12" font-weight="normal" fill="#000" text-anchor="start" textLength="60.17" lengthAdjust="spacingAndGlyphs" stroke="#000" stroke-width="0.2">Access time:</text>
<rect x="733" y="377" width="92" height="15" fill="#000"/>
<text x="757.2" y="388.7" font-size="12.5" font-weight="bold" fill="#ffff00" text-anchor="start" textLength="45.16" lengthAdjust="spacingAndGlyphs">14.4 ms</text>
<text x="732.2" y="413" font-size="12" font-weight="normal" fill="#000" text-anchor="start" textLength="45.89" lengthAdjust="spacingAndGlyphs" stroke="#000" stroke-width="0.2">Burst rate</text>
<rect x="733" y="420" width="92" height="15" fill="#000"/>
<text x="738.9" y="431.7" font-size="12.5" font-weight="bold" fill="#ffffff" text-anchor="start" textLength="80.99" lengthAdjust="spacingAndGlyphs">120.7 MB/sec</text>
<text x="732.82" y="455" font-size="12" font-weight="normal" fill="#000" text-anchor="start" textLength="53.79" lengthAdjust="spacingAndGlyphs" stroke="#000" stroke-width="0.2">CPU usage</text>
<rect x="733" y="462" width="92" height="15" fill="#000"/>
<text x="764.1" y="473.7" font-size="12.5" font-weight="bold" fill="#ffffff" text-anchor="start" textLength="32.33" lengthAdjust="spacingAndGlyphs">-1.0%</text>
</svg></body></html>
